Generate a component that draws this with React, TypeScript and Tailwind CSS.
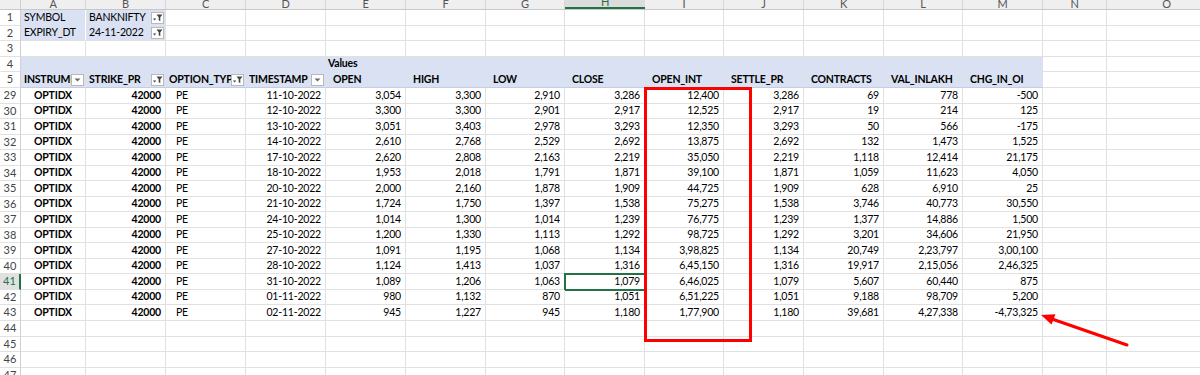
import clsx from 'clsx';

const widths = [
  'w-[65px]', 'w-[80px]', 'w-[80px]', 'w-[80px]', 'w-[80px]', 'w-[80px]', 'w-[79px]',
  'w-[80px]', 'w-[79px]', 'w-[80px]', 'w-[80px]', 'w-[79px]', 'w-[80px]', 'w-[64px]', 'w-[120px]',
];
const letters = ['A', 'B', 'C', 'D', 'E', 'F', 'G', 'H', 'I', 'J', 'K', 'L', 'M', 'N', 'O'];

const valueHeads = ['OPEN', 'HIGH', 'LOW', 'CLOSE', 'OPEN_INT', 'SETTLE_PR', 'CONTRACTS', 'VAL_INLAKH', 'CHG_IN_OI'];

// row no, date, open, high, low, close, oi, settle, contracts, val, chg
const data: [number, string, ...string[]][] = [
  [29, '11-10-2022', '3,054', '3,300', '2,910', '3,286', '12,400', '3,286', '69', '778', '-500'],
  [30, '12-10-2022', '3,300', '3,300', '2,901', '2,917', '12,525', '2,917', '19', '214', '125'],
  [31, '13-10-2022', '3,051', '3,403', '2,978', '3,293', '12,350', '3,293', '50', '566', '-175'],
  [32, '14-10-2022', '2,610', '2,768', '2,529', '2,692', '13,875', '2,692', '132', '1,473', '1,525'],
  [33, '17-10-2022', '2,620', '2,808', '2,163', '2,219', '35,050', '2,219', '1,118', '12,414', '21,175'],
  [34, '18-10-2022', '1,953', '2,018', '1,791', '1,871', '39,100', '1,871', '1,059', '11,623', '4,050'],
  [35, '20-10-2022', '2,000', '2,160', '1,878', '1,909', '44,725', '1,909', '628', '6,910', '25'],
  [36, '21-10-2022', '1,724', '1,750', '1,397', '1,538', '75,275', '1,538', '3,746', '40,773', '30,550'],
  [37, '24-10-2022', '1,014', '1,300', '1,014', '1,239', '76,775', '1,239', '1,377', '14,886', '1,500'],
  [38, '25-10-2022', '1,200', '1,330', '1,113', '1,292', '98,725', '1,292', '3,201', '34,606', '21,950'],
  [39, '27-10-2022', '1,091', '1,195', '1,068', '1,134', '3,98,825', '1,134', '20,749', '2,23,797', '3,00,100'],
  [40, '28-10-2022', '1,124', '1,413', '1,037', '1,316', '6,45,150', '1,316', '19,917', '2,15,056', '2,46,325'],
  [41, '31-10-2022', '1,089', '1,206', '1,063', '1,079', '6,46,025', '1,079', '5,607', '60,440', '875'],
  [42, '01-11-2022', '980', '1,132', '870', '1,051', '6,51,225', '1,051', '9,188', '98,709', '5,200'],
  [43, '02-11-2022', '945', '1,227', '945', '1,180', '1,77,900', '1,180', '39,681', '4,27,338', '-4,73,325'],
];

function FilterBtn({ dropdown }: { dropdown?: boolean }) {
  return (
    <div className="shrink-0 w-[13px] h-[12px] mr-[1px] bg-white border border-[#b9b9b9] flex items-center justify-center">
      {dropdown ? (
        <svg width="7" height="4" viewBox="0 0 7 4">
          <path d="M0.5 0.5h6L3.5 3.5z" fill="#6b6b6b" />
        </svg>
      ) : (
        <svg width="10" height="8" viewBox="0 0 10 8">
          <path d="M3.5 0.5h6L7.3 3.3v4L5.7 6.3v-3z" fill="#444" />
          <path d="M0 4.5h3.2L1.6 6.6z" fill="#444" />
        </svg>
      )}
    </div>
  );
}

function Cell({ col, className, children }: { col: number; className?: string; children?: React.ReactNode }) {
  return (
    <div
      className={clsx(
        'shrink-0 h-full flex items-center overflow-hidden whitespace-nowrap border-r border-b border-[#e1e1e1]',
        widths[col],
        className
      )}
    >
      {children}
    </div>
  );
}

function RowHead({ n, active }: { n: number; active?: boolean }) {
  return (
    <div
      className={clsx(
        'shrink-0 w-[21px] h-full flex items-center justify-center border-b border-[#e1e1e1] text-[11px] tracking-normal',
        active
          ? 'bg-[#e1e1e1] text-[#217346] border-r-2 border-r-[#217346]'
          : 'bg-white text-[#444] border-r border-r-[#cfcfcf]'
      )}
    >
      {n}
    </div>
  );
}

export default function App() {
  const blue = 'bg-[#d9e1f2]';
  const heightOf = (i: number) => (i % 2 === 0 ? 'h-[16px]' : 'h-[15px]');

  return (
    <div
      className="relative w-[1200px] h-[375px] overflow-hidden bg-white text-black text-[10.5px] tracking-[-0.2px]"
      style={{ fontFamily: 'Lato, "Open Sans", sans-serif' }}
    >
      {/* column letters */}
      <div className="flex h-[10px] bg-[#efefef] border-b border-[#c8c8c8]">
        <div className="shrink-0 w-[21px] border-r border-[#cfcfcf]" />
        {letters.map((l, i) => (
          <div
            key={l}
            className={clsx(
              'shrink-0 flex items-end justify-center leading-[11px] text-[11px] overflow-hidden',
              widths[i],
              l === 'H'
                ? 'bg-[#dcdcdc] text-[#217346] border-b-2 border-[#217346]'
                : 'text-[#555] border-r border-[#d7d7d7]'
            )}
          >
            {l}
          </div>
        ))}
      </div>

      {/* row 1 */}
      <div className="flex h-[16px]">
        <RowHead n={1} />
        <Cell col={0} className={clsx(blue, 'pl-[3px] border-r-white border-b-[#d9e1f2]')}>SYMBOL</Cell>
        <Cell col={1} className={clsx(blue, 'pl-[3px] border-b-[#d9e1f2]')}>
          <span className="flex-1 overflow-hidden">BANKNIFTY</span>
          <FilterBtn />
        </Cell>
        {letters.slice(2).map((l, i) => <Cell key={l} col={i + 2} />)}
      </div>

      {/* row 2 */}
      <div className="flex h-[15px]">
        <RowHead n={2} />
        <Cell col={0} className={clsx(blue, 'pl-[3px] border-r-white')}>EXPIRY_DT</Cell>
        <Cell col={1} className={clsx(blue, 'pl-[3px]')}>
          <span className="flex-1 overflow-hidden">24-11-2022</span>
          <FilterBtn />
        </Cell>
        {letters.slice(2).map((l, i) => <Cell key={l} col={i + 2} />)}
      </div>

      {/* row 3 */}
      <div className="flex h-[16px]">
        <RowHead n={3} />
        {letters.map((l, i) => <Cell key={l} col={i} />)}
      </div>

      {/* row 4 */}
      <div className="flex h-[15px]">
        <RowHead n={4} />
        {letters.map((l, i) =>
          i <= 12 ? (
            <Cell key={l} col={i} className={clsx(blue, 'border-r-[#d9e1f2] border-b-[#d9e1f2] font-bold pl-[2px]')}>
              {l === 'E' ? 'Values' : ''}
            </Cell>
          ) : (
            <Cell key={l} col={i} />
          )
        )}
      </div>

      {/* row 5 */}
      <div className="flex h-[16px]">
        <RowHead n={5} />
        {[
          ['INSTRUMENT', true],
          ['STRIKE_PR', false],
          ['OPTION_TYPE', false],
          ['TIMESTAMP', true],
        ].map(([label, dd], i) => (
          <Cell key={i} col={i} className={clsx(blue, 'border-r-[#d9e1f2] border-b-[#c3cde3] font-bold pl-[3px]')}>
            <span className="flex-1 overflow-hidden">{label as string}</span>
            <FilterBtn dropdown={dd as boolean} />
          </Cell>
        ))}
        {valueHeads.map((h, i) => (
          <Cell key={h} col={i + 4} className={clsx(blue, 'border-r-[#d9e1f2] border-b-[#c3cde3] font-bold pl-[7px]')}>
            {h}
          </Cell>
        ))}
        <Cell col={13} />
        <Cell col={14} />
      </div>

      {/* data rows */}
      {data.map(([n, date, ...vals], idx) => (
        <div key={n} className={clsx('flex', heightOf(idx))}>
          <RowHead n={n} active={n === 41} />
          <Cell col={0} className="justify-center font-bold">OPTIDX</Cell>
          <Cell col={1} className="justify-end pr-[4px] font-bold">42000</Cell>
          <Cell col={2} className="pl-[10px]">PE</Cell>
          <Cell col={3} className="justify-end pr-[4px]">{date}</Cell>
          {vals.map((v, i) => (
            <Cell
              key={i}
              col={i + 4}
              className={clsx(
                'justify-end pr-[4px]',
                n === 41 && i === 3 && 'outline-2 -outline-offset-1 outline-[#217346]'
              )}
            >
              {v}
            </Cell>
          ))}
          <Cell col={13} />
          <Cell col={14} />
        </div>
      ))}

      {/* empty rows */}
      {[44, 45, 46, 47].map((n, idx) => (
        <div key={n} className={clsx('flex', heightOf(idx))}>
          <RowHead n={n} />
          {letters.map((l, i) => <Cell key={l} col={i} />)}
        </div>
      ))}

      {/* annotation: red box */}
      <div className="absolute left-[644px] top-[87px] w-[108px] h-[255px] border-[3px] border-[#fe0000]" />

      {/* annotation: arrow */}
      <svg className="absolute left-0 top-0 pointer-events-none" width="1200" height="375">
        <line x1="1127" y1="345" x2="1052" y2="319" stroke="#fe0000" strokeWidth="3" strokeLinecap="round" />
        <polygon points="1041,315 1055.5,314.3 1051.5,324.5" fill="#fe0000" />
      </svg>
    </div>
  );
}
